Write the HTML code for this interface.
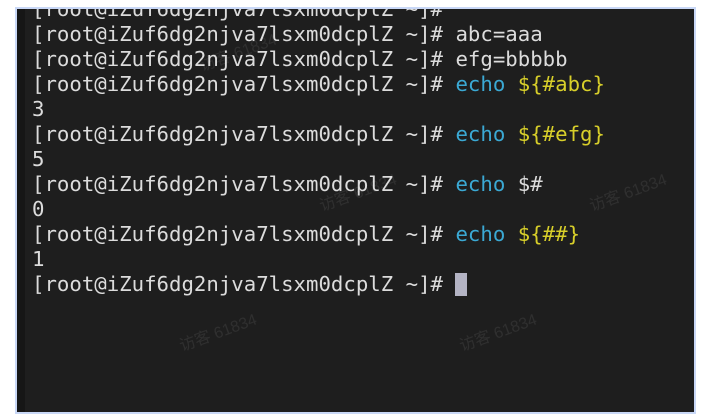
<!DOCTYPE html>
<html><head><meta charset="utf-8"><style>
html,body{margin:0;padding:0;background:#fff;width:706px;height:420px;overflow:hidden}
.frame{position:absolute;left:15px;top:7px;width:681px;height:407px;background:#c9d8f7}
.term{position:absolute;left:17px;top:9px;width:677px;height:403px;background:#1e1e1e;overflow:hidden}
.strip{position:absolute;left:0;top:0;width:8px;height:100%;background:#161616}
pre{position:absolute;left:15px;top:-12px;margin:0;font-family:"DejaVu Sans Mono","Liberation Mono",monospace;font-size:20.7px;line-height:25px;color:#dcdcdc}
.c{color:#3ba9d4}.y{color:#d8cf2a}
.cur{display:inline-block;width:12px;height:23px;background:#b4b4c4;vertical-align:-5px}
.wm{position:absolute;font-family:"Liberation Sans","Noto Sans CJK SC",sans-serif;font-size:16px;color:rgba(255,255,255,0.08);transform:rotate(-20deg)}
</style></head><body>
<div class="frame"></div>
<div class="term"><div class="strip"></div>
<pre>[root@iZuf6dg2njva7lsxm0dcplZ ~]#
[root@iZuf6dg2njva7lsxm0dcplZ ~]# abc=aaa
[root@iZuf6dg2njva7lsxm0dcplZ ~]# efg=bbbbb
[root@iZuf6dg2njva7lsxm0dcplZ ~]# <span class="c">echo</span> <span class="y">${#abc}</span>
3
[root@iZuf6dg2njva7lsxm0dcplZ ~]# <span class="c">echo</span> <span class="y">${#efg}</span>
5
[root@iZuf6dg2njva7lsxm0dcplZ ~]# <span class="c">echo</span> $#
0
[root@iZuf6dg2njva7lsxm0dcplZ ~]# <span class="c">echo</span> <span class="y">${##}</span>
1
[root@iZuf6dg2njva7lsxm0dcplZ ~]# <span class="cur"></span></pre>
<div class="wm" style="left:300px;top:170px">访客 61834</div>
<div class="wm" style="left:570px;top:170px">访客 61834</div>
<div class="wm" style="left:160px;top:310px">访客 61834</div>
<div class="wm" style="left:440px;top:310px">访客 61834</div>
<div class="wm" style="left:180px;top:30px">访客 61834</div>
</div>
</body></html>
